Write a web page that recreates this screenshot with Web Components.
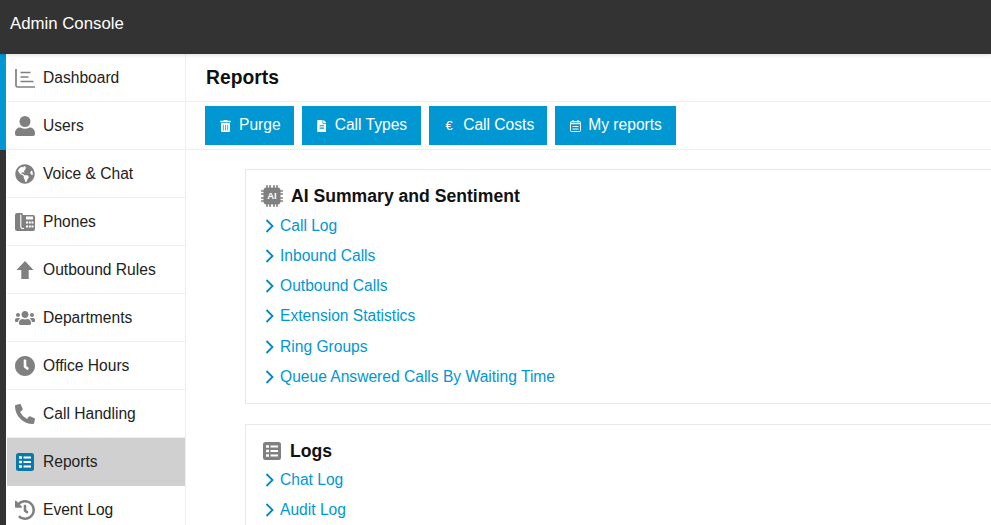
<!DOCTYPE html>
<html>
<head>
<meta charset="utf-8">
<title>Admin Console</title>
<style>
  html,body{margin:0;height:525px;overflow:hidden;background:#fff}
  body{font:15.6px "Liberation Sans",Arial,sans-serif;color:#222}
</style>
</head>
<body>
<admin-app></admin-app>
<script>
// solid glyphs, drawn to the same box as the nav column
const svg = (vb, d, w, h, fill='#808080') => `<svg viewBox="${vb}" width="${w}" height="${h}" fill="${fill}"><path d="${d}"/></svg>`;
const list = (bg) => `<svg viewBox="0 0 18 18" width="18" height="18"><rect width="18" height="18" rx="2.500" fill="${bg}"/><path d="M3 3.300h3v2.400H3zM3 7.800h3v2.400H3zM3 12.300h3v2.400H3zM7.500 3.500h7.500v2H7.500zM7.500 8h7.500v2H7.500zM7.500 12.500h7.500v2H7.500z" fill="#fff"/></svg>`;
const ICONS = {
  dashboard:`<svg viewBox="0 0 20 20" width="20" height="20"><path d="M1 1v16.500a1.500 1.500 0 0 0 1.500 1.500H21" fill="none" stroke="#808080" stroke-width="1.700"/><path d="M5.500 4.500h10M5.500 9h8M5.500 13.500h13" stroke="#808080" stroke-width="1.500"/></svg>`,
  user:`<svg viewBox="0 0 20 20" width="20" height="20" fill="#808080"><circle cx="10" cy="5.500" r="5.500"/><path d="M0 17c0-3.500 2.500-5.500 5.500-5.500 1.500.8 3 1.300 4.500 1.300s3-.5 4.500-1.300c3 0 5.500 2 5.500 5.500v1a2 2 0 0 1-2 2H2a2 2 0 0 1-2-2z"/></svg>`,
  globe:svg('0 0 496 512','M248 8C111.030 8 0 119.030 0 256s111.030 248 248 248 248-111.030 248-248S384.970 8 248 8zm82.290 357.600c-3.900 3.880-7.990 7.950-11.310 11.280-2.990 3-5.100 6.700-6.170 10.710-1.510 5.660-2.730 11.380-4.770 16.870l-17.390 46.850c-13.760 3-28 4.690-42.650 4.690v-27.380c1.690-12.620-7.640-36.260-22.630-51.250-6-6-9.370-14.140-9.370-22.630v-32.010c0-11.640-6.270-22.340-16.460-27.970-14.370-7.950-34.810-19.060-48.810-26.110-11.480-5.780-22.100-13.140-31.650-21.750l-.8-.72a114.792 114.792 0 0 1-18.060-20.740c-9.380-13.770-24.660-36.420-34.590-51.140 20.470-45.500 57.360-82.040 103.200-101.890l24.010 12.010C203.480 89.740 216 82.010 216 70.110v-11.300c7.990-1.290 16.120-2.110 24.450-2.420l28.300 28.300c6.250 6.250 6.250 16.380 0 22.630L264 112l-10.340 10.340c-3.120 3.120-3.120 8.190 0 11.310l4.690 4.690c3.120 3.120 3.120 8.190 0 11.310l-8 8a8.008 8.008 0 0 1-5.660 2.340h-8.990c-2.080 0-4.080.81-5.580 2.270l-9.920 9.650a8.008 8.008 0 0 0-1.580 9.310l15.590 31.190c2.660 5.320-1.210 11.580-7.150 11.580h-5.640c-1.930 0-3.790-.7-5.240-1.960l-9.280-8.060a16.017 16.017 0 0 0-15.550-3.100l-31.170 10.390a11.950 11.950 0 0 0-8.170 11.340c0 4.530 2.560 8.660 6.610 10.690l11.080 5.540c9.410 4.710 19.790 7.160 30.310 7.160s22.590 27.290 32 32h66.750c8.490 0 16.620 3.370 22.630 9.370l13.690 13.690a30.503 30.503 0 0 1 8.930 21.570 46.536 46.536 0 0 1-13.720 32.980zM417 274.250c-5.790-1.450-10.840-5-14.150-9.970l-17.980-26.970a23.970 23.970 0 0 1 0-26.620l19.590-29.380c2.320-3.470 5.500-6.290 9.240-8.150l12.980-6.490C440.200 193.590 448 223.870 448 256c0 8.670-.74 17.160-1.820 25.540L417 274.250z',20,20),
  phone:`<svg viewBox="0 0 20 18" width="20" height="18"><path d="M2 0h4.500a1.500 1.500 0 0 1 1.500 1.500V2h10a2 2 0 0 1 2 2v12a2 2 0 0 1-2 2H2a2 2 0 0 1-2-2V2a2 2 0 0 1 2-2z" fill="#808080"/><path d="M5.800 1.500v12.300q0 1.700 1.700 1.700h1.500" fill="none" stroke="#fff" stroke-width="1.100"/><rect x="11" y="3.500" width="7" height="3" fill="#fff"/><path d="M11 8.500h2v2h-2zM13.800 8.500h2v2h-2zM16.500 8.500h2v2h-2zM11 12.500h2v2h-2zM13.800 12.500h2v2h-2zM16.500 12.500h2v2h-2z" fill="#fff"/></svg>`,
  up:`<svg viewBox="0 0 18 18" width="18" height="18"><path d="M9 0l8.500 9h-4.800v9H5.300V9H.5z" fill="#808080"/></svg>`,
  people:svg('0 0 640 512','M96 224c35.300 0 64-28.700 64-64s-28.700-64-64-64-64 28.700-64 64 28.700 64 64 64zm448 0c35.300 0 64-28.700 64-64s-28.700-64-64-64-64 28.700-64 64 28.700 64 64 64zm32 32h-64c-17.600 0-33.500 7.100-45.100 18.600 40.300 22.100 68.900 62 75.100 109.400h66c17.700 0 32-14.300 32-32v-32c0-35.300-28.700-64-64-64zm-256 0c61.900 0 112-50.100 112-112S381.900 32 320 32 208 82.100 208 144s50.100 112 112 112zm76.800 32h-8.300c-20.800 10-43.900 16-68.500 16s-47.600-6-68.500-16h-8.300C179.600 288 128 339.600 128 403.200V432c0 26.500 21.500 48 48 48h288c26.500 0 48-21.500 48-48v-28.800c0-63.600-51.600-115.200-115.200-115.200zm-223.700-13.400C161.500 263.100 145.600 256 128 256H64c-35.300 0-64 28.700-64 64v32c0 17.700 14.300 32 32 32h65.900c6.300-47.400 34.900-87.300 75.200-109.400z',20,16),
  clock:svg('8 8 496 496','M256,8C119,8,8,119,8,256S119,504,256,504,504,393,504,256,393,8,256,8Zm92.490,313h0l-20,25a16,16,0,0,1-22.490,2.500h0l-67-49.720a40,40,0,0,1-15-31.230V112a16,16,0,0,1,16-16h32a16,16,0,0,1,16,16V256l58,42.500A16,16,0,0,1,348.490,321Z',20,20),
  call:svg('0 0 512 512','M497.390 361.800l-112-48a24 24 0 0 0-28 6.900l-49.600 60.600A370.660 370.660 0 0 1 130.600 204.190l60.600-49.600a23.940 23.940 0 0 0 6.900-28l-48-112A24.160 24.160 0 0 0 122.600.610l-104 24A24 24 0 0 0 0 48c0 256.500 207.900 464 464 464a24 24 0 0 0 23.400-18.600l24-104a24.290 24.290 0 0 0-14.010-27.600z',20,20),
  report:list('#0a78a8'),
  logs:list('#808080'),
  history:svg('8 8 496 496','M504 255.531c.253 136.640-111.180 248.372-247.820 248.468-59.015.042-113.223-20.530-155.822-54.911-11.077-8.940-11.905-25.541-1.839-35.607l11.267-11.267c8.609-8.609 22.353-9.551 31.891-1.984C173.062 425.135 212.781 440 256 440c101.705 0 184-82.311 184-184 0-101.705-82.311-184-184-184-48.814 0-93.149 18.969-126.068 49.932l50.754 50.754c10.080 10.080 2.941 27.314-11.313 27.314H24c-8.837 0-16-7.163-16-16V38.627c0-14.254 17.234-21.393 27.314-11.314l49.372 49.372C129.209 34.136 189.552 8 256 8c136.810 0 247.747 110.780 248 247.531zm-180.912 78.784l9.823-12.630c8.138-10.463 6.253-25.542-4.210-33.679L288 256.349V152c0-13.255-10.745-24-24-24h-16c-13.255 0-24 10.745-24 24v135.651l65.409 50.874c10.463 8.137 25.541 6.253 33.679-4.210z',20,20),
  trash:svg('0 0 448 512','M32 464a48 48 0 0 0 48 48h288a48 48 0 0 0 48-48V128H32zm272-256a16 16 0 0 1 32 0v224a16 16 0 0 1-32 0zm-96 0a16 16 0 0 1 32 0v224a16 16 0 0 1-32 0zm-96 0a16 16 0 0 1 32 0v224a16 16 0 0 1-32 0zM432 32H312l-9.400-18.700A24 24 0 0 0 281.100 0H166.800a23.720 23.720 0 0 0-21.400 13.300L136 32H16A16 16 0 0 0 0 48v32a16 16 0 0 0 16 16h416a16 16 0 0 0 16-16V48a16 16 0 0 0-16-16z',11,12,'#fff'),
  file:svg('0 0 384 512','M224 136V0H24C10.700 0 0 10.700 0 24v464c0 13.300 10.700 24 24 24h336c13.300 0 24-10.700 24-24V160H248c-13.200 0-24-10.800-24-24zm64 236c0 6.600-5.400 12-12 12H108c-6.600 0-12-5.400-12-12v-8c0-6.600 5.400-12 12-12h168c6.600 0 12 5.400 12 12v8zm0-64c0 6.600-5.400 12-12 12H108c-6.600 0-12-5.400-12-12v-8c0-6.600 5.400-12 12-12h168c6.600 0 12 5.400 12 12v8zm0-72v8c0 6.600-5.400 12-12 12H108c-6.600 0-12-5.400-12-12v-8c0-6.600 5.400-12 12-12h168c6.600 0 12 5.400 12 12zm96-114.100v6.100H256V0h6.100c6.400 0 12.500 2.500 17 7l97.900 98c4.500 4.500 7 10.600 7 16.900z',9.500,12,'#fff'),
  calendar:`<svg viewBox="0 0 11 12" width="11" height="12"><rect x=".5" y="1.500" width="10" height="10" rx="1" fill="none" stroke="#fff" stroke-width="1"/><path d="M3 0v2.500M8 0v2.500" stroke="#fff" stroke-width="1.200"/><path d="M.5 3.500h10" stroke="#fff" stroke-width="1.500"/><path d="M2.500 6.500h6M2.500 9h6" stroke="#fff" stroke-width="1.200"/></svg>`,
  chip:`<svg viewBox="0 0 22 22" width="22" height="22"><rect x="2.500" y="2.500" width="17" height="17" rx="3" fill="#808080"/><path d="M6 0v3M9 0v3M13 0v3M16 0v3M6 19v3M9 19v3M13 19v3M16 19v3M0 6h3M0 9h3M0 13h3M0 16h3M19 6h3M19 9h3M19 13h3M19 16h3" stroke="#808080" stroke-width="1.500"/></svg>`
};

class TopBar extends HTMLElement {
  constructor(){
    super();
    this.attachShadow({mode:'open'}).innerHTML = `
      <style>
        :host{display:block;height:54px;background:#333;color:#fff;box-shadow:0 1px 4px #0002;position:relative;z-index:1}
        .title{padding:15px 10px 0;font-size:16.800px;line-height:18px}
      </style>
      <div class="title"><slot></slot></div>`;
  }
}
customElements.define('top-bar', TopBar);

class NavItem extends HTMLElement {
  constructor(){
    super();
    this.attachShadow({mode:'open'}).innerHTML = `
      <style>
        :host{display:flex;align-items:center;height:47px;border-bottom:1px solid #eee;background:#fff;color:#222}
        :host([active]){background:#d0d0d0;border-bottom-color:#d0d0d0}
        .ic{width:20px;height:20px;margin:0 8px 0 8px;display:flex;align-items:center;justify-content:center}
        .tx{padding-top:1px}
      </style>
      <span class="ic"><slot name="icon"></slot></span><span class="tx"><slot></slot></span>`;
  }
}
customElements.define('nav-item', NavItem);

class SideNav extends HTMLElement {
  constructor(){
    super();
    const items = [
      ['dashboard','Dashboard'],['user','Users'],['globe','Voice &amp; Chat'],['phone','Phones'],
      ['up','Outbound Rules'],['people','Departments'],['clock','Office Hours'],['call','Call Handling'],
      ['report','Reports'],['history','Event Log']
    ];
    const html = items.map(([ic,label])=>
      `<nav-item${ic==='report'?' active':''}><span slot="icon" style="display:flex">${ICONS[ic]}</span>${label}</nav-item>`
    ).join('');
    this.attachShadow({mode:'open'}).innerHTML = `
      <style>
        :host{display:flex;width:186px;flex:none;height:471px;overflow:hidden;background:#fff}
        .rail{width:6px;flex:none;background:linear-gradient(#0097d3 96px,#333 96px)}
        .list{flex:1;margin-left:1px;border-right:1px solid #eee;min-width:0}
      </style>
      <div class="rail"></div><div class="list">${html}</div>`;
  }
}
customElements.define('side-nav', SideNav);

class ToolButton extends HTMLElement {
  constructor(){
    super();
    this.attachShadow({mode:'open'}).innerHTML = `
      <style>
        :host{display:flex;align-items:center;height:39px;padding:0 13px 0 14px;gap:8px;background:#0097d3;color:#fff}
        :host([tight]){gap:7px;padding-right:14px}
        .ic{width:12px;display:flex;justify-content:center}
        .tx{margin-top:-1px}
      </style>
      <span class="ic"><slot name="icon"></slot></span><span class="tx"><slot></slot></span>`;
  }
}
customElements.define('tool-button', ToolButton);

class LinkRow extends HTMLElement {
  constructor(){
    super();
    this.attachShadow({mode:'open'}).innerHTML = `
      <style>
        :host{display:flex;align-items:center;height:30.200px;color:#0097d3;gap:6px;padding-left:3px}
        svg{flex:none}
      </style>
      <svg viewBox="0 0 10 14" width="10" height="14"><path d="M2.500 1l6 6-6 6" fill="none" stroke="#0088c4" stroke-width="1.800"/></svg><slot></slot>`;
  }
}
customElements.define('link-row', LinkRow);

class ReportCard extends HTMLElement {
  constructor(){
    super();
    this.attachShadow({mode:'open'}).innerHTML = `
      <style>
        :host{display:block;border:1px solid #e8e8e8;border-right:0;padding:14px 15px 11px;margin-bottom:20px;background:#fff}
        h2{margin:0;display:flex;align-items:center;gap:var(--title-gap,8px);font-size:17.600px;line-height:24px;font-weight:bold;color:#111}
        .ic{display:flex;width:22px;justify-content:center}
        .links{margin-top:var(--links-gap,2.800px)}
      </style>
      <h2><span class="ic"><slot name="icon"></slot></span><slot name="title"></slot></h2>
      <div class="links"><slot></slot></div>`;
  }
}
customElements.define('report-card', ReportCard);

class AdminApp extends HTMLElement {
  constructor(){
    super();
    this.attachShadow({mode:'open'}).innerHTML = `
      <style>
        :host{display:block;width:991px;height:525px;overflow:hidden}
        .body{display:flex;height:471px}
        main{flex:1;min-width:0;overflow:hidden}
        .head{height:47px;border-bottom:1px solid #eee;display:flex;align-items:center;padding-left:20px;font-size:19.300px;font-weight:bold;color:#111}
        .tools{display:flex;gap:8px;padding:4px 0 4px 19px;border-bottom:1px solid #eee}
        .content{padding:19px 0 0 59px}
        span[slot=icon]{display:flex}
        .chip{position:relative;display:flex}
        .chip b{position:absolute;inset:0;display:flex;align-items:center;justify-content:center;color:#fff;font-size:9.500px;font-weight:bold}
        .euro{font-size:13px}
      </style>
      <top-bar>Admin Console</top-bar>
      <div class="body">
        <side-nav></side-nav>
        <main>
          <div class="head">Reports</div>
          <div class="tools">
            <tool-button><span slot="icon">${ICONS.trash}</span>Purge</tool-button>
            <tool-button tight><span slot="icon">${ICONS.file}</span>Call Types</tool-button>
            <tool-button><span slot="icon" class="euro">€</span>Call Costs</tool-button>
            <tool-button tight><span slot="icon">${ICONS.calendar}</span>My reports</tool-button>
          </div>
          <div class="content">
            <report-card>
              <span slot="icon" class="chip">${ICONS.chip}<b>AI</b></span>
              <span slot="title">AI Summary and Sentiment</span>
              <link-row>Call Log</link-row>
              <link-row>Inbound Calls</link-row>
              <link-row>Outbound Calls</link-row>
              <link-row>Extension Statistics</link-row>
              <link-row>Ring Groups</link-row>
              <link-row>Queue Answered Calls By Waiting Time</link-row>
            </report-card>
            <report-card style="--links-gap:2px;--title-gap:7px">
              <span slot="icon">${ICONS.logs}</span>
              <span slot="title">Logs</span>
              <link-row>Chat Log</link-row>
              <link-row>Audit Log</link-row>
            </report-card>
          </div>
        </main>
      </div>`;
  }
}
customElements.define('admin-app', AdminApp);
</script>
</body>
</html>
